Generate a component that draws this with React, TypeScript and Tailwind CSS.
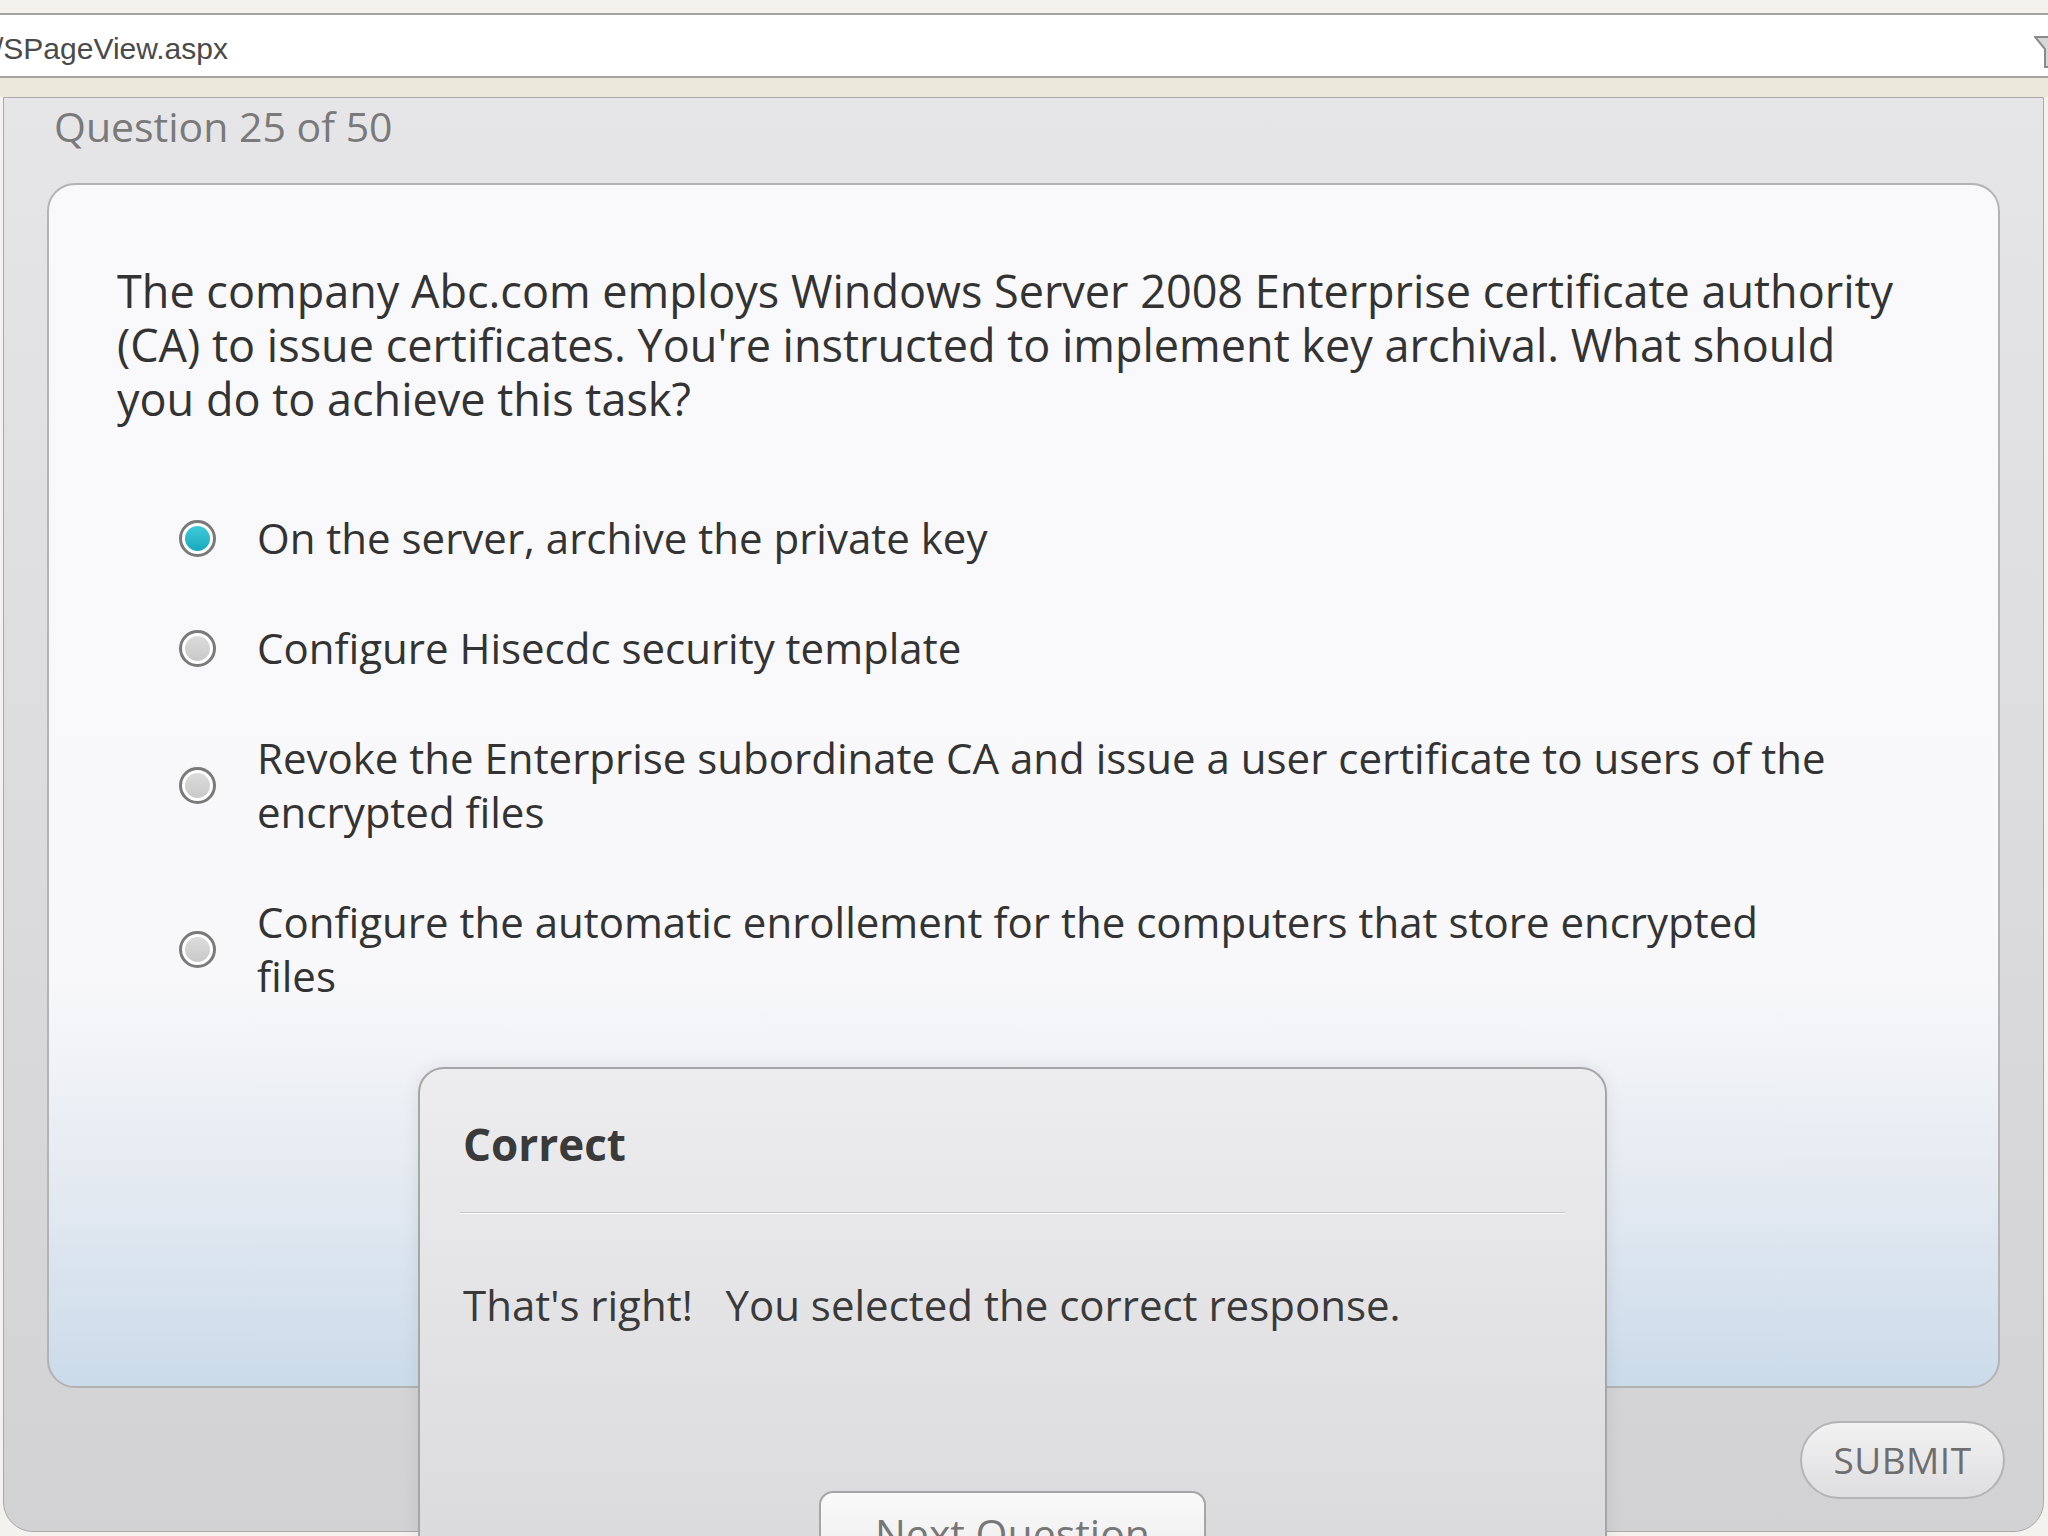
import React from "react";

const options = [
  { lines: ["On the server, archive the private key"], selected: true },
  { lines: ["Configure Hisecdc security template"], selected: false },
  {
    lines: [
      "Revoke the Enterprise subordinate CA and issue a user certificate to users of the",
      "encrypted files",
    ],
    selected: false,
  },
  {
    lines: [
      "Configure the automatic enrollement for the computers that store encrypted",
      "files",
    ],
    selected: false,
  },
];

function Radio({ selected }: { selected: boolean }) {
  return (
    <div className="w-[37px] h-[37px] shrink-0 rounded-full border-[3px] border-[#7a7a7a] bg-white p-[3px]">
      {selected ? (
        <div className="w-full h-full rounded-full bg-gradient-to-b from-[#3fcadb] to-[#15a9bd]" />
      ) : (
        <div className="w-full h-full rounded-full bg-gradient-to-b from-[#dcdcdc] to-[#c9c9c9]" />
      )}
    </div>
  );
}

export default function App() {
  return (
    <div className="relative w-[2048px] h-[1536px] overflow-hidden bg-[#f3f2ee] font-['Open_Sans',sans-serif]">
      {/* browser chrome */}
      <div className="h-[13px] bg-[#f4f2ec]" />
      <div className="relative h-[65px] border-y-2 border-[#a3a3a3] bg-white flex items-center overflow-hidden">
        <span className="ml-[-5px] mt-[6px] text-[30px] text-[#4a4a4a] font-['Liberation_Sans',sans-serif]">
          /SPageView.aspx
        </span>
        <svg
          className="absolute right-[-12px] top-[20px]"
          width="26"
          height="34"
          viewBox="0 0 26 34"
        >
          <path d="M1 2 L25 2 L15 14 L15 32 L11 32 L11 14 Z" fill="#d6d6d6" stroke="#8a8a8a" strokeWidth="2" />
        </svg>
      </div>
      <div className="h-[19px] bg-[#ebe8dc]" />

      {/* player panel */}
      <div className="ml-[3px] w-[2041px] h-[1435px] border border-[#a9a9a9] rounded-b-[30px] bg-gradient-to-b from-[#e6e6e8] to-[#d2d2d4] px-[43px] pt-[1px]">
        <div className="pl-[7px] text-[41px] leading-[54px] text-[#7a7a7a]">Question 25 of 50</div>

        <div className="mt-[30px] h-[1205px] rounded-[28px] border-2 border-[#b3b3b5] bg-[linear-gradient(to_bottom,#f9f9fb_0%,#f8f8fa_66%,#e6ebf2_82%,#cbdbea_100%)] pl-[68px] pt-[79px]">
          <p className="text-[45px] leading-[54px] text-[#333] whitespace-nowrap">
            <span className="block">The company Abc.com employs Windows Server 2008 Enterprise certificate authority</span>
            <span className="block">(CA) to issue certificates. You're instructed to implement key archival. What should</span>
            <span className="block">you do to achieve this task?</span>
          </p>

          <div className="mt-[85px] pl-[62px] flex flex-col gap-[56px]">
            {options.map((o, i) => (
              <div key={i} className="flex items-center gap-[41px]">
                <Radio selected={o.selected} />
                <div className="text-[42px] leading-[54px] text-[#333] whitespace-nowrap">
                  {o.lines.map((l) => (
                    <span key={l} className="block">
                      {l}
                    </span>
                  ))}
                </div>
              </div>
            ))}
          </div>
        </div>

        <div className="mt-[33px] flex justify-end mr-[-5px]">
          <button className="w-[205px] h-[78px] rounded-full border-2 border-[#b4b4b6] bg-gradient-to-b from-[#f2f2f3] to-[#dedee0] text-[37px] text-[#6e6e6e] tracking-[0.5px]">
            SUBMIT
          </button>
        </div>
      </div>

      {/* feedback dialog */}
      <div className="absolute left-[418px] top-[1067px] w-[1189px] h-[520px] rounded-[26px] border-2 border-[#a6a6a8] bg-gradient-to-b from-[#ededef] to-[#d9d9db] shadow-[0_0_18px_rgba(0,0,0,0.08)] pt-[45px]">
        <div className="pl-[43px] text-[44px] font-bold text-[#3a3a3a] leading-[60px]">Correct</div>
        <div className="mt-[38px] mx-[40px] h-[2px] bg-[#c4c4c6] border-b border-white" />
        <div className="mt-[64px] pl-[43px] text-[42px] leading-[54px] text-[#3a3a3a] whitespace-pre">
          That's right!   You selected the correct response.
        </div>
        <button className="block mx-auto mt-[159px] w-[387px] h-[80px] rounded-t-[14px] border-2 border-[#a5a5a7] bg-gradient-to-b from-[#fafafa] to-[#ececee] text-[41px] text-[#777] pt-[6px]">
          Next Question
        </button>
      </div>
    </div>
  );
}
